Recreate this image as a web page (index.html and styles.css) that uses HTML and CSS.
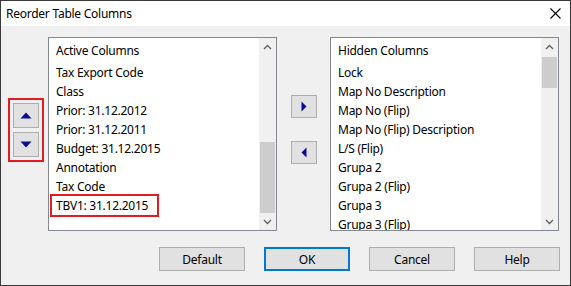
FILE: index.html
```html
<!DOCTYPE html>
<html lang="en">
<head>
    <meta charset="UTF-8">
    <title>Reorder Table Columns</title>
    <link rel="stylesheet" href="styles.css">
</head>
<body>
    <div class="dialog">
        <div class="titlebar">
            <span class="title">Reorder Table Columns</span>
            <svg class="close" width="11" height="11" viewBox="0 0 11 11">
                <path d="M0.5 0.5 L10.5 10.5 M10.5 0.5 L0.5 10.5" stroke="#000" stroke-width="1.1" fill="none"/>
            </svg>
        </div>

        <div class="content">
            <div class="columns">
                <div class="move-group">
                    <button class="btn small-btn">
                        <svg width="12" height="7" viewBox="0 0 12 7"><path d="M6 0.5 L11.5 6.5 L0.5 6.5 Z" fill="#0a0a96"/></svg>
                    </button>
                    <button class="btn small-btn">
                        <svg width="12" height="7" viewBox="0 0 12 7"><path d="M0.5 0.5 L11.5 0.5 L6 6.5 Z" fill="#0a0a96"/></svg>
                    </button>
                </div>

                <div class="listbox">
                    <ul class="items">
                        <li class="header">Active Columns</li>
                        <li>Tax Export Code</li>
                        <li>Class</li>
                        <li>Prior: 31.12.2012</li>
                        <li>Prior: 31.12.2011</li>
                        <li>Budget: 31.12.2015</li>
                        <li>Annotation</li>
                        <li>Tax Code</li>
                        <li><span class="marked">TBV1: 31.12.2015</span></li>
                    </ul>
                    <div class="scrollbar">
                        <div class="arrow">
                            <svg width="9" height="6" viewBox="0 0 9 6"><path d="M1 5 L4.5 1.5 L8 5" stroke="#606060" stroke-width="1.3" fill="none"/></svg>
                        </div>
                        <div class="track track-end">
                            <div class="thumb thumb-active"></div>
                        </div>
                        <div class="arrow">
                            <svg width="9" height="6" viewBox="0 0 9 6"><path d="M1 1 L4.5 4.5 L8 1" stroke="#606060" stroke-width="1.3" fill="none"/></svg>
                        </div>
                    </div>
                </div>

                <div class="transfer">
                    <button class="btn side-btn side-first">
                        <svg width="6" height="11" viewBox="0 0 6 11"><path d="M0.5 0.5 L5.5 5.5 L0.5 10.5 Z" fill="#0a0a96"/></svg>
                    </button>
                    <button class="btn side-btn side-second">
                        <svg width="6" height="11" viewBox="0 0 6 11"><path d="M5.5 0.5 L0.5 5.5 L5.5 10.5 Z" fill="#0a0a96"/></svg>
                    </button>
                </div>

                <div class="listbox">
                    <ul class="items">
                        <li class="header">Hidden Columns</li>
                        <li>Lock</li>
                        <li>Map No Description</li>
                        <li>Map No (Flip)</li>
                        <li>Map No (Flip) Description</li>
                        <li>L/S (Flip)</li>
                        <li>Grupa 2</li>
                        <li>Grupa 2 (Flip)</li>
                        <li>Grupa 3</li>
                        <li>Grupa 3 (Flip)</li>
                    </ul>
                    <div class="scrollbar">
                        <div class="arrow">
                            <svg width="9" height="6" viewBox="0 0 9 6"><path d="M1 5 L4.5 1.5 L8 5" stroke="#606060" stroke-width="1.3" fill="none"/></svg>
                        </div>
                        <div class="track">
                            <div class="thumb thumb-hidden"></div>
                        </div>
                        <div class="arrow">
                            <svg width="9" height="6" viewBox="0 0 9 6"><path d="M1 1 L4.5 4.5 L8 1" stroke="#606060" stroke-width="1.3" fill="none"/></svg>
                        </div>
                    </div>
                </div>
            </div>

            <div class="actions">
                <button class="btn action-btn">Default</button>
                <button class="btn action-btn primary">OK</button>
                <button class="btn action-btn">Cancel</button>
                <button class="btn action-btn">Help</button>
            </div>
        </div>
    </div>
</body>
</html>
```

FILE: styles.css
```css
* {
    margin: 0;
    padding: 0;
    box-sizing: border-box;
    font-family: 'Noto Sans', 'Open Sans', sans-serif;
    letter-spacing: -0.25px;
}

body {
    background: #f0f0f0;
}

.dialog {
    width: 571px;
    height: 286px;
    border: 1px solid #3a3a3a;
    background: #f0f0f0;
    display: flex;
    flex-direction: column;
}

.titlebar {
    height: 25px;
    background: #fff;
    display: flex;
    align-items: center;
    justify-content: space-between;
    padding: 0 9px 0 5px;
}

.title {
    font-size: 12px;
    color: #000;
}

.close {
    display: block;
}

.content {
    flex: 1;
    padding: 11px 10px 0 7px;
}

.columns {
    display: flex;
    align-items: flex-start;
}

.btn {
    background: #e1e1e1;
    border: 1px solid #adadad;
    color: #000;
    font-size: 12px;
    display: flex;
    align-items: center;
    justify-content: center;
}

.btn svg {
    display: block;
}

.move-group {
    margin-top: 61px;
    margin-right: 4px;
    width: 36px;
    border: 2px solid #e31b23;
    padding: 3px;
    display: flex;
    flex-direction: column;
    gap: 4px;
}

.small-btn {
    width: 26px;
    height: 25px;
}

.listbox {
    width: 229px;
    height: 194px;
    border: 1px solid #828790;
    background: #fff;
    display: flex;
    overflow: hidden;
}

.items {
    flex: 1;
    list-style: none;
    padding-left: 7px;
    overflow: hidden;
    font-size: 12px;
    color: #000;
}

.items li {
    height: 19px;
    line-height: 19px;
    white-space: nowrap;
}

.items .header {
    height: 25px;
    line-height: 25px;
}

.marked {
    display: inline-block;
    line-height: 19px;
    padding: 0 9px 0 4px;
    margin-left: -4px;
    outline: 2px solid #e31b23;
}

.scrollbar {
    width: 17px;
    background: #f0f0f0;
    display: flex;
    flex-direction: column;
}

.arrow {
    height: 17px;
    display: flex;
    align-items: center;
    justify-content: center;
}

.track {
    flex: 1;
    display: flex;
    flex-direction: column;
    padding: 0 1px;
}

.track-end {
    justify-content: flex-end;
}

.thumb {
    background: #cdcdcd;
}

.thumb-active {
    height: 71px;
}

.thumb-hidden {
    margin-top: 2px;
    height: 31px;
}

.transfer {
    width: 53px;
    padding-left: 14px;
    display: flex;
    flex-direction: column;
}

.side-btn {
    width: 26px;
    height: 23px;
}

.side-first {
    margin-top: 58px;
}

.side-second {
    margin-top: 23px;
}

.actions {
    margin-top: 16px;
    display: flex;
    justify-content: flex-end;
    gap: 19px;
}

.action-btn {
    width: 86px;
    height: 24px;
}

.primary {
    border: 2px solid #0078d7;
}
```
